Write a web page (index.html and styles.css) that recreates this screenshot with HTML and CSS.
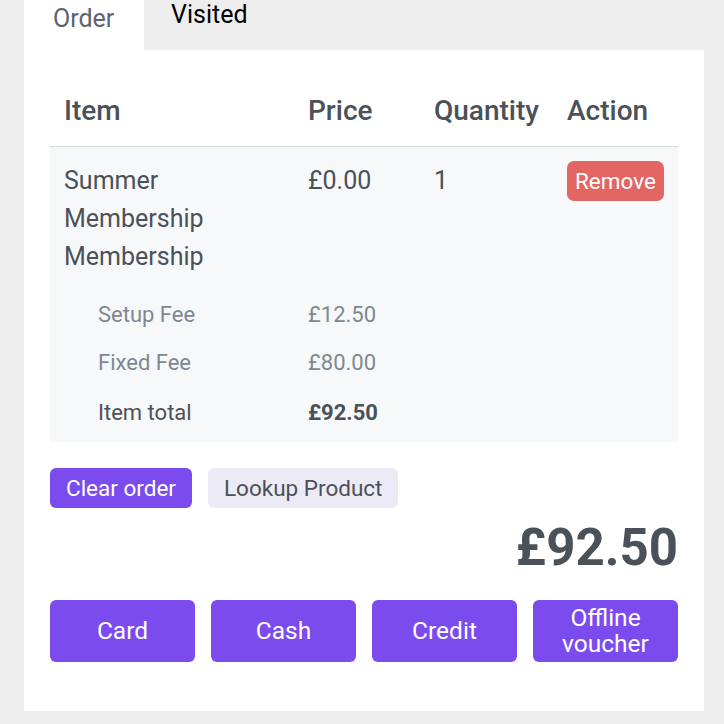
FILE: index.html
```html
<!DOCTYPE html>
<html>
<head>
<meta charset="utf-8">
<link rel="stylesheet" href="styles.css">
</head>
<body>
<div class="tabs">
  <div class="tab active">Order</div>
  <div class="tab">Visited</div>
</div>
<div class="panel">
  <table class="order">
    <thead>
      <tr>
        <th class="c-item">Item</th>
        <th class="c-price">Price</th>
        <th class="c-qty">Quantity</th>
        <th class="c-act">Action</th>
      </tr>
    </thead>
    <tbody>
      <tr class="main">
        <td>Summer<br>Membership<br>Membership</td>
        <td>£0.00</td>
        <td>1</td>
        <td><button class="btn-remove">Remove</button></td>
      </tr>
      <tr class="fee">
        <td class="indent">Setup Fee</td>
        <td>£12.50</td>
        <td></td>
        <td></td>
      </tr>
      <tr class="fee">
        <td class="indent">Fixed Fee</td>
        <td>£80.00</td>
        <td></td>
        <td></td>
      </tr>
      <tr class="fee total">
        <td class="indent">Item total</td>
        <td><strong>£92.50</strong></td>
        <td></td>
        <td></td>
      </tr>
    </tbody>
  </table>
  <div class="actions">
    <button class="btn btn-primary">Clear order</button>
    <button class="btn btn-light">Lookup Product</button>
  </div>
  <div class="grand">£92.50</div>
  <div class="pay">
    <button class="pay-btn">Card</button>
    <button class="pay-btn">Cash</button>
    <button class="pay-btn">Credit</button>
    <button class="pay-btn">Offline<br>voucher</button>
  </div>
</div>
</body>
</html>
```

FILE: styles.css
```css
* { box-sizing: border-box; }
body {
  margin: 0;
  background: #eeeeee;
  font-family: Roboto, "Liberation Sans", sans-serif;
  color: #4b5158;
}
.tabs {
  display: flex;
  margin-left: 24px;
  height: 50px;
}
.tab {
  font-size: 25px;
  line-height: 28px;
  color: #000;
  padding: 1px 27px 0;
}
.tab.active {
  width: 120px;
  background: #fff;
  color: #5d646c;
  padding: 5px 0 0 29px;
}
.panel {
  width: 680px;
  margin-left: 24px;
  background: #fff;
  padding: 26px 26px 49px;
}
.order {
  width: 100%;
  border-collapse: collapse;
  table-layout: fixed;
}
.c-item { width: 244px; }
.c-price { width: 126px; }
.c-qty { width: 133px; }
.c-act { width: 125px; }
.order th {
  text-align: left;
  font-weight: 500;
  font-size: 28px;
  line-height: 32px;
  padding: 19px 14px 19px;
  border-bottom: 1px solid #d8dde4;
  color: #4b5158;
}
.order tbody tr { background: #f7f8fa; }
.order td {
  vertical-align: top;
  padding: 0 14px;
}
.main td {
  font-size: 25px;
  line-height: 38px;
  padding-top: 15px;
  padding-bottom: 15px;
}
.main td:last-child { padding-top: 14px; }
.btn-remove {
  font-family: inherit;
  font-size: 22.5px;
  line-height: 40px;
  height: 40px;
  padding: 0 8px;
  border: 0;
  border-radius: 7px;
  background: #e36663;
  color: #fff;
  display: block;
}
.fee td {
  font-size: 22px;
  line-height: 24px;
  padding-top: 12px;
  padding-bottom: 12px;
  color: #7d8893;
}
.fee td.indent { padding-left: 48px; }
.total td {
  color: #4b5158;
  padding-top: 14px;
  padding-bottom: 17px;
}
.total strong { font-weight: 700; }
.actions {
  display: flex;
  gap: 16px;
  margin-top: 26px;
}
.btn {
  font-family: inherit;
  font-size: 22.5px;
  height: 40px;
  line-height: 40px;
  padding: 0 16px;
  border: 0;
  border-radius: 6px;
}
.btn-primary { background: #7b4bed; color: #fff; }
.btn-light { background: #eceaf4; color: #4b5158; }
.grand {
  text-align: right;
  font-size: 51px;
  font-weight: 700;
  line-height: 60px;
  margin-top: 10px;
  color: #4b5158;
}
.pay {
  display: grid;
  grid-template-columns: repeat(4, 1fr);
  gap: 16px;
  margin-top: 22px;
}
.pay-btn {
  font-family: inherit;
  font-size: 24.5px;
  line-height: 26px;
  height: 62px;
  border: 0;
  border-radius: 6px;
  background: #7b4bed;
  color: #fff;
  padding: 0;
}
```
